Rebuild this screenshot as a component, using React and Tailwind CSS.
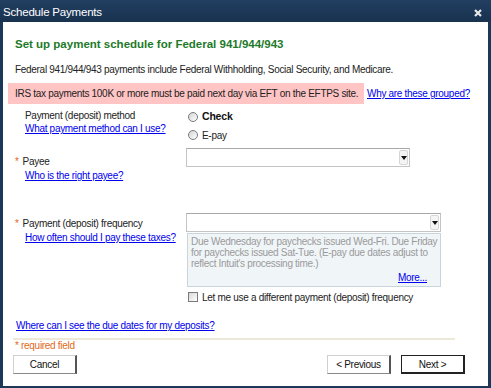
import React from "react";

const F = { fontFamily: '"Liberation Sans", Arial, sans-serif' };

function Radio({ label, bold }) {
  return (
    <div className="flex items-center h-[18px]">
      <span className="w-[10px] h-[10px] rounded-full border border-[#7a7a7a] bg-gradient-to-br from-[#d4d4d4] to-white ml-[2px] mr-[4px]" />
      <span className={bold ? "font-bold text-[10.5px] tracking-[-0.2px] text-[#111]" : "text-[10px] text-[#222]"}>{label}</span>
    </div>
  );
}

function Select({ w }) {
  return (
    <div className={`flex h-[19px] border border-[#c4c4c4] border-t-[#a8a8a8] bg-white ${w}`}>
      <div className="flex-1" />
      <div className="w-[9px] my-[1px] mr-[1px] rounded-[2px] border border-[#d6d6d6] bg-[#f4f4f4] flex items-center justify-center">
        <svg width="6" height="4" viewBox="0 0 6 4"><path d="M0 0h6L3 4z" fill="#111" /></svg>
      </div>
    </div>
  );
}

function Link({ children, className = "" }) {
  return <span className={`text-[#0000ee] underline whitespace-nowrap ${className}`}>{children}</span>;
}

export default function App() {
  return (
    <div className="w-[491px] h-[388px] bg-[#1b3858] flex flex-col" style={F}>
      <div className="h-[22px] flex items-center justify-between bg-gradient-to-b from-[#223f61] to-[#18324f] pl-[3px] pr-[9px] pt-[3px]">
        <span className="text-white text-[11.5px] tracking-[-0.2px]">Schedule Payments</span>
        <svg width="8" height="8" viewBox="0 0 8 8"><path d="M1 1L7 7M7 1L1 7" stroke="#e8e8e8" strokeWidth="2.2" /></svg>
      </div>
      <div className="flex-1 mx-[3px] mb-[2px] bg-white text-[10px] tracking-[-0.3px] text-[#222] flex flex-col whitespace-nowrap">
        <div className="pl-[12px] pt-[15px] h-[36px] text-[#1d7a2a] font-bold text-[11.5px] tracking-[0px] leading-[14px]">
          Set up payment schedule for Federal 941/944/943
        </div>
        <div className="pl-[12px] mt-[5px] h-[18px] leading-[14px]">
          Federal 941/944/943 payments include Federal Withholding, Social Security, and Medicare.
        </div>
        <div className="flex items-center mt-[2px] h-[21px]">
          <div className="ml-[5px] w-[356px] h-full bg-[#ffc4c4] pl-[7px] flex items-center">
            IRS tax payments 100K or more must be paid next day via EFT on the EFTPS site.
          </div>
          <Link className="ml-[3px]">Why are these grouped?</Link>
        </div>
        <div className="flex mt-[4px] h-[40px]">
          <div className="w-[183px] pl-[22px] flex flex-col items-start leading-[13px] pt-[1px]">
            <span>Payment (deposit) method</span>
            <Link>What payment method can I use?</Link>
          </div>
          <div className="flex flex-col">
            <Radio label="Check" bold />
            <Radio label="E-pay" />
          </div>
        </div>
        <div className="flex h-[65px]">
          <div className="w-[183px] pl-[12px] flex flex-col items-start leading-[14px] pt-[7px]">
            <span><span className="text-[#e06a1a] mr-[4px]">*</span>Payee</span>
            <Link className="ml-[10px]">Who is the right payee?</Link>
          </div>
          <div className="pt-[0px]">
            <Select w="w-[224px]" />
          </div>
        </div>
        <div className="flex">
          <div className="w-[183px] pl-[12px] flex flex-col items-start leading-[14px] pt-[4px]">
            <span><span className="text-[#e06a1a] mr-[4px]">*</span>Payment (deposit) frequency</span>
            <Link className="ml-[10px]">How often should I pay these taxes?</Link>
          </div>
          <div className="flex flex-col">
            <Select w="w-[255px]" />
            <div className="mt-[1px] ml-[1px] w-[254px] h-[54px] bg-[#f0f5f8] border border-[#c9d5dd] px-[3px] pt-[2px] text-[#9a9a9a] leading-[11px] flex flex-col">
              <span>Due Wednesday for paychecks issued Wed-Fri. Due Friday</span>
              <span>for paychecks issued Sat-Tue. (E-pay due dates adjust to</span>
              <span>reflect Intuit's processing time.)</span>
              <Link className="self-end mr-[10px] mt-[3px]">More...</Link>
            </div>
            <div className="flex items-center mt-[3px] h-[14px]">
              <span className="w-[10px] h-[10px] ml-[2px] mr-[4px] border border-[#7a7a7a] bg-gradient-to-br from-[#d8d8d8] to-white" />
              <span>Let me use a different payment (deposit) frequency</span>
            </div>
          </div>
        </div>
        <div className="pl-[13px] mt-[15px] leading-[14px]">
          <Link>Where can I see the due dates for my deposits?</Link>
        </div>
        <div className="ml-[10px] w-[442px] h-[2px] bg-[#ece9d8] mt-[5px]" />
        <div className="pl-[12px] text-[#e06a1a] leading-[12px]">* required field</div>
        <div className="flex items-start mt-[3px] pl-[10px]">
          <div className="w-[64px] h-[19px] bg-white border border-[#d0d0d0] border-r-[2px] border-r-[#555] border-b-[#888] flex items-center justify-center text-[#111]">Cancel</div>
          <div className="flex-1" />
          <div className="w-[64px] h-[19px] bg-white border border-[#d0d0d0] border-r-[2px] border-r-[#555] border-b-[#888] flex items-center justify-center text-[#111]">&lt; Previous</div>
          <div className="w-[64px] h-[19px] ml-[10px] mr-[23px] bg-white border border-[#222] border-r-[2px] border-b-[2px] flex items-center justify-center text-[#111]">Next &gt;</div>
        </div>
      </div>
    </div>
  );
}
